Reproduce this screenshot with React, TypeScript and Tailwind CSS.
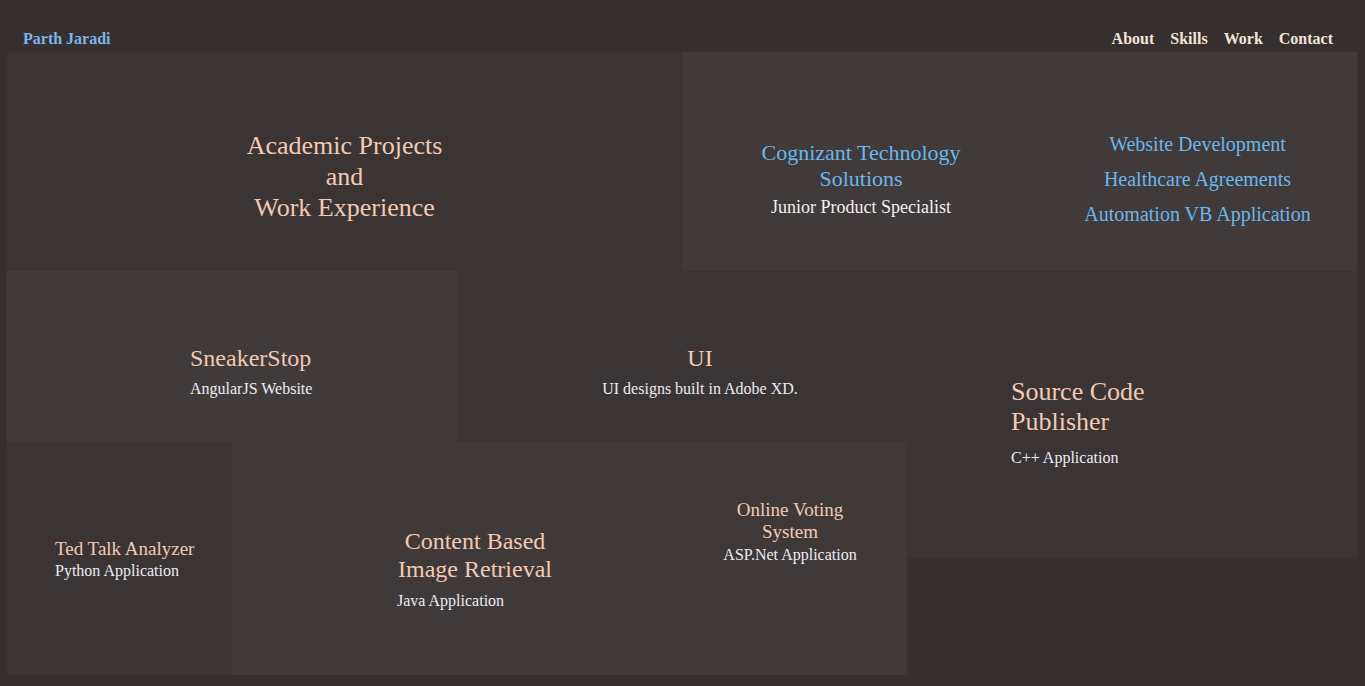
const NAV = ['About', 'Skills', 'Work', 'Contact'];

const WORK = ['Website Development', 'Healthcare Agreements', 'Automation VB Application'];

export default function App() {
  return (
    <div className="min-h-screen bg-[#35302f] [font-family:'Liberation_Serif','Times_New_Roman',serif] overflow-hidden">
      <header className="flex items-end justify-between h-[52px] pb-[5px] pl-[23px] pr-[32px]">
        <span className="text-[16px] font-bold text-[#80b3ea] leading-none">Parth Jaradi</span>
        <nav className="flex gap-[16px] text-[16px] font-bold text-[#f1e4d8] leading-none">
          {NAV.map((n) => (
            <span key={n}>{n}</span>
          ))}
        </nav>
      </header>

      <main className="ml-[7px] w-[1350px]">
        <div className="flex h-[219px]">
          <section className="w-[675px] bg-[#3a3534] flex flex-col items-center pt-[78px]">
            <h1 className="text-[26px] leading-[31px] text-center text-[#f3c9b3]">
              Academic Projects
              <br />
              and
              <br />
              Work Experience
            </h1>
          </section>
          <section className="w-[675px] bg-[#403b3a] flex">
            <div className="w-[358px] flex flex-col items-center pt-[88px]">
              <h2 className="text-[22px] leading-[26px] text-center text-[#6cb6ea]">
                Cognizant Technology
                <br />
                Solutions
              </h2>
              <p className="text-[18px] leading-[21px] mt-[5px] text-[#f2f0f2]">Junior Product Specialist</p>
            </div>
            <ul className="flex-1 flex flex-col items-center gap-[12px] pt-[81px] pr-[2px]">
              {WORK.map((w) => (
                <li key={w} className="text-[20px] leading-[23px] text-[#6cb6ea]">
                  {w}
                </li>
              ))}
            </ul>
          </section>
        </div>

        <div className="flex items-start">
          <div className="w-[900px]">
            <div className="flex h-[171px]">
              <section className="w-[450px] bg-[#403b3a] pl-[183px] pt-[73px]">
                <h3 className="text-[24px] leading-[28px] text-[#f3c9b3]">SneakerStop</h3>
                <p className="text-[16px] leading-[19px] mt-[7px] text-[#ecebf4]">AngularJS Website</p>
              </section>
              <section className="w-[450px] bg-[#3a3534] flex flex-col items-center pl-[36px] pt-[73px]">
                <h3 className="text-[24px] leading-[28px] text-[#f3c9b3]">UI</h3>
                <p className="text-[16px] leading-[19px] mt-[7px] text-[#ecebf4]">UI designs built in Adobe XD.</p>
              </section>
            </div>
            <div className="flex h-[233px]">
              <section className="w-[225px] bg-[#3a3534] pl-[48px] pt-[96px]">
                <h3 className="text-[19px] leading-[22px] text-[#f3c9b3]">Ted Talk Analyzer</h3>
                <p className="text-[16px] leading-[19px] mt-[1px] text-[#ecebf4]">Python Application</p>
              </section>
              <section className="w-[450px] bg-[#3f3a39] pl-[165px] pt-[85px]">
                <h3 className="w-[156px] text-[24px] leading-[28px] text-center text-[#f3c9b3]">
                  Content Based
                  <br />
                  Image Retrieval
                </h3>
                <p className="text-[16px] leading-[19px] mt-[8px] text-[#ecebf4]">Java Application</p>
              </section>
              <section className="w-[225px] bg-[#3e3938] flex flex-col items-center pr-[9px] pt-[57px]">
                <h3 className="text-[19px] leading-[22px] text-center text-[#f3c9b3]">
                  Online Voting
                  <br />
                  System
                </h3>
                <p className="text-[16px] leading-[20px] mt-[2px] text-[#ecebf4]">ASP.Net Application</p>
              </section>
            </div>
          </div>
          <section className="w-[450px] h-[287px] bg-[#3a3534] pl-[104px] pt-[106px]">
            <h3 className="text-[26px] leading-[30px] text-[#f3c9b3]">
              Source Code
              <br />
              Publisher
            </h3>
            <p className="text-[16px] leading-[19px] mt-[11px] text-[#ecebf4]">C++ Application</p>
          </section>
        </div>
      </main>
    </div>
  );
}
